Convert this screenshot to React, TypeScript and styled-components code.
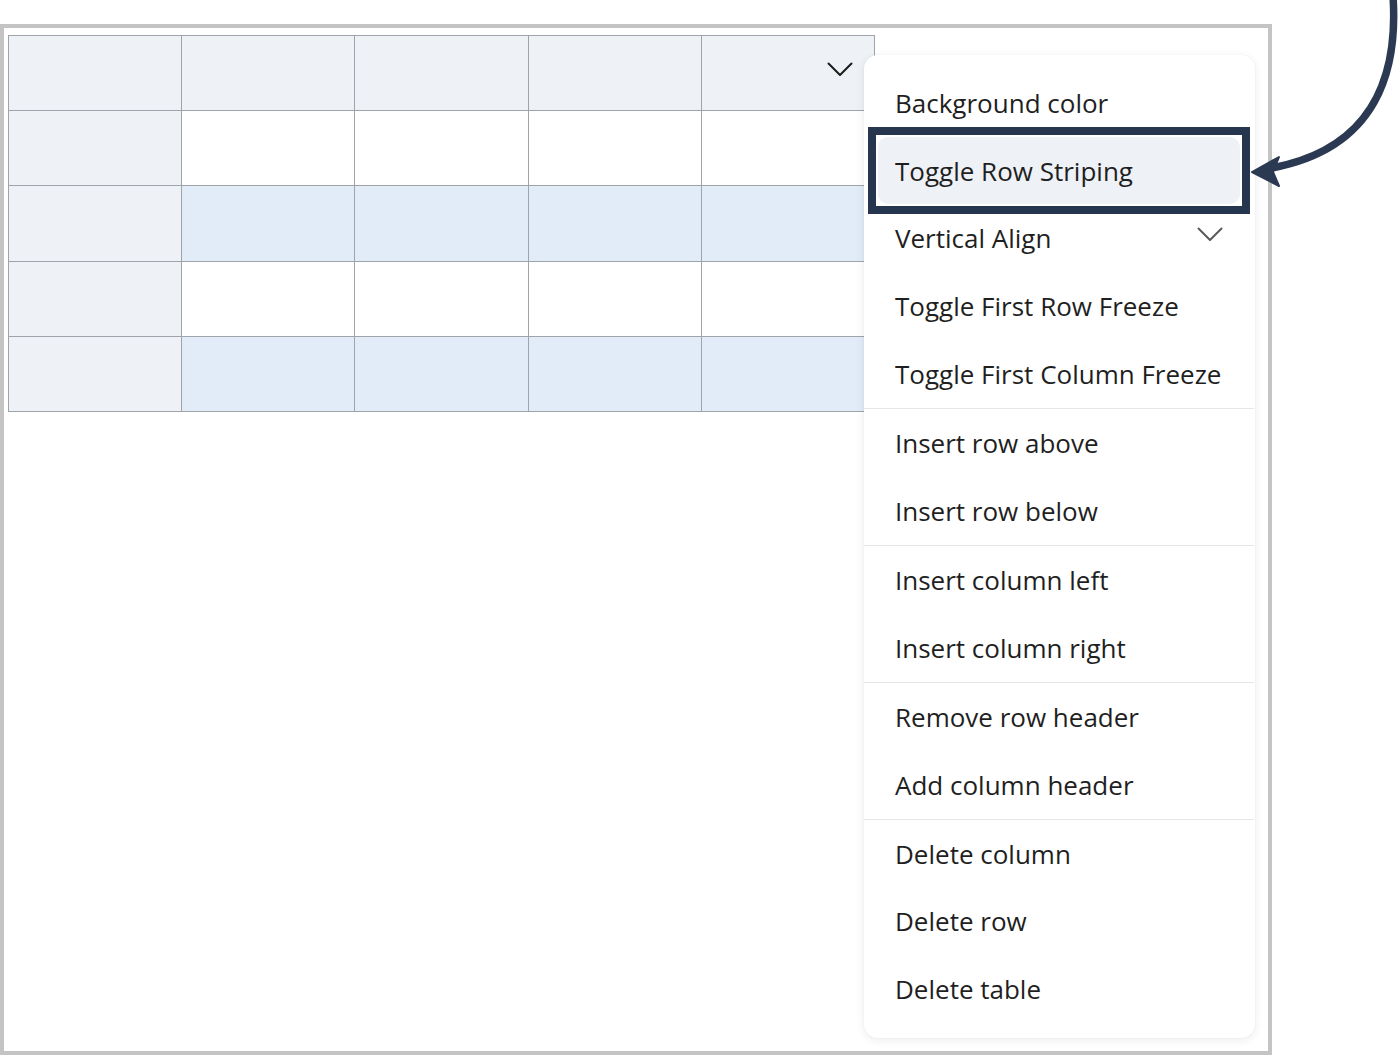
import React from 'react'
import styled, { createGlobalStyle } from 'styled-components'

const GlobalStyle = createGlobalStyle`
  html, body {
    margin: 0;
    padding: 0;
    background: #ffffff;
    font-family: "Open Sans", "Noto Sans", sans-serif;
    color: #1f1f1f;
  }
`

const Page = styled.div`
  position: relative;
  width: 1400px;
  height: 1055px;
  overflow: hidden;
  padding-top: 24px;
  box-sizing: border-box;
`

const Frame = styled.div`
  position: relative;
  width: 1272px;
  height: 1031px;
  box-sizing: border-box;
  border: 4px solid #c4c4c4;
  padding: 7px 0 0 4px;
`

const Grid = styled.table`
  border-collapse: collapse;
  table-layout: fixed;
  width: 867px;
`

const Cell = styled.td<{ $tone: 'head' | 'plain' | 'stripe' }>`
  position: relative;
  height: 74.2px;
  padding: 0;
  border: 1px solid #9fa4aa;
  background: ${({ $tone }) =>
    $tone === 'head' ? '#eef2f7' : $tone === 'stripe' ? '#e1ecf8' : '#ffffff'};
`

const CellAction = styled.span`
  position: absolute;
  right: 21px;
  top: 26px;
  display: flex;
`

const Menu = styled.div`
  position: absolute;
  left: 860px;
  top: 27px;
  width: 391px;
  box-sizing: border-box;
  padding: 14px 15px 15px 14px;
  background: #ffffff;
  border-radius: 14px;
  box-shadow: 0 2px 10px rgba(0, 0, 0, 0.08), 0 0 2px rgba(0, 0, 0, 0.06);
  display: flex;
  flex-direction: column;
`

const Item = styled.div<{ $active?: boolean }>`
  position: relative;
  height: 67.7px;
  display: flex;
  align-items: center;
  justify-content: space-between;
  padding: 0 17px;
  font-size: 26px;
  border-radius: 10px;
  background: ${({ $active }) => ($active ? '#eef1f6' : 'transparent')};
  white-space: nowrap;

  ${({ $active }) =>
    $active &&
    `
    &::before {
      content: '';
      position: absolute;
      inset: -10px;
      border: 8px solid #27364f;
      pointer-events: none;
    }
  `}
`

const ItemIcon = styled.span`
  display: flex;
  margin-top: -8px;
`

const Divider = styled.div`
  height: 1px;
  margin: 0.3px -14px;
  background: #e4e6e9;
`

const Pointer = styled.svg`
  position: absolute;
  left: 0;
  top: 0;
  pointer-events: none;
`

const Chevron = ({ color }: { color: string }) => (
  <svg width="26" height="15" viewBox="0 0 26 15">
    <path d="M1.5 1.5 L13 13 L24.5 1.5" fill="none" stroke={color} strokeWidth="2" strokeLinecap="round" strokeLinejoin="round" />
  </svg>
)

const rows: Array<'head' | 'plain' | 'stripe'> = ['head', 'plain', 'stripe', 'plain', 'stripe']

const groups = [
  ['Background color', 'Toggle Row Striping', 'Vertical Align', 'Toggle First Row Freeze', 'Toggle First Column Freeze'],
  ['Insert row above', 'Insert row below'],
  ['Insert column left', 'Insert column right'],
  ['Remove row header', 'Add column header'],
  ['Delete column', 'Delete row', 'Delete table'],
]

const App = () => {
  return (
    <>
      <GlobalStyle />
      <Page>
        <Frame>
          <Grid>
            <tbody>
              {rows.map((tone, r) => (
                <tr key={r}>
                  {[0, 1, 2, 3, 4].map(c => (
                    <Cell key={c} $tone={r === 0 || c === 0 ? 'head' : tone}>
                      {r === 0 && c === 4 && (
                        <CellAction>
                          <Chevron color="#1c1c1c" />
                        </CellAction>
                      )}
                    </Cell>
                  ))}
                </tr>
              ))}
            </tbody>
          </Grid>

          <Menu>
            {groups.map((group, g) => (
              <React.Fragment key={g}>
                {g > 0 && <Divider />}
                {group.map(label => (
                  <Item key={label} $active={label === 'Toggle Row Striping'}>
                    {label}
                    {label === 'Vertical Align' && (
                      <ItemIcon>
                        <Chevron color="#5a5a5a" />
                      </ItemIcon>
                    )}
                  </Item>
                ))}
              </React.Fragment>
            ))}
          </Menu>
        </Frame>

        <Pointer width="1400" height="220" viewBox="0 0 1400 220">
          <path d="M1393 -4 C1398 70 1378 148 1272 168" fill="none" stroke="#2b3a52" strokeWidth="7.5" strokeLinecap="round" />
          <polygon points="1252,172 1279,157 1273,172 1279,186" fill="#2b3a52" stroke="#2b3a52" strokeWidth="2" strokeLinejoin="round" />
        </Pointer>
      </Page>
    </>
  )
}

export default App
